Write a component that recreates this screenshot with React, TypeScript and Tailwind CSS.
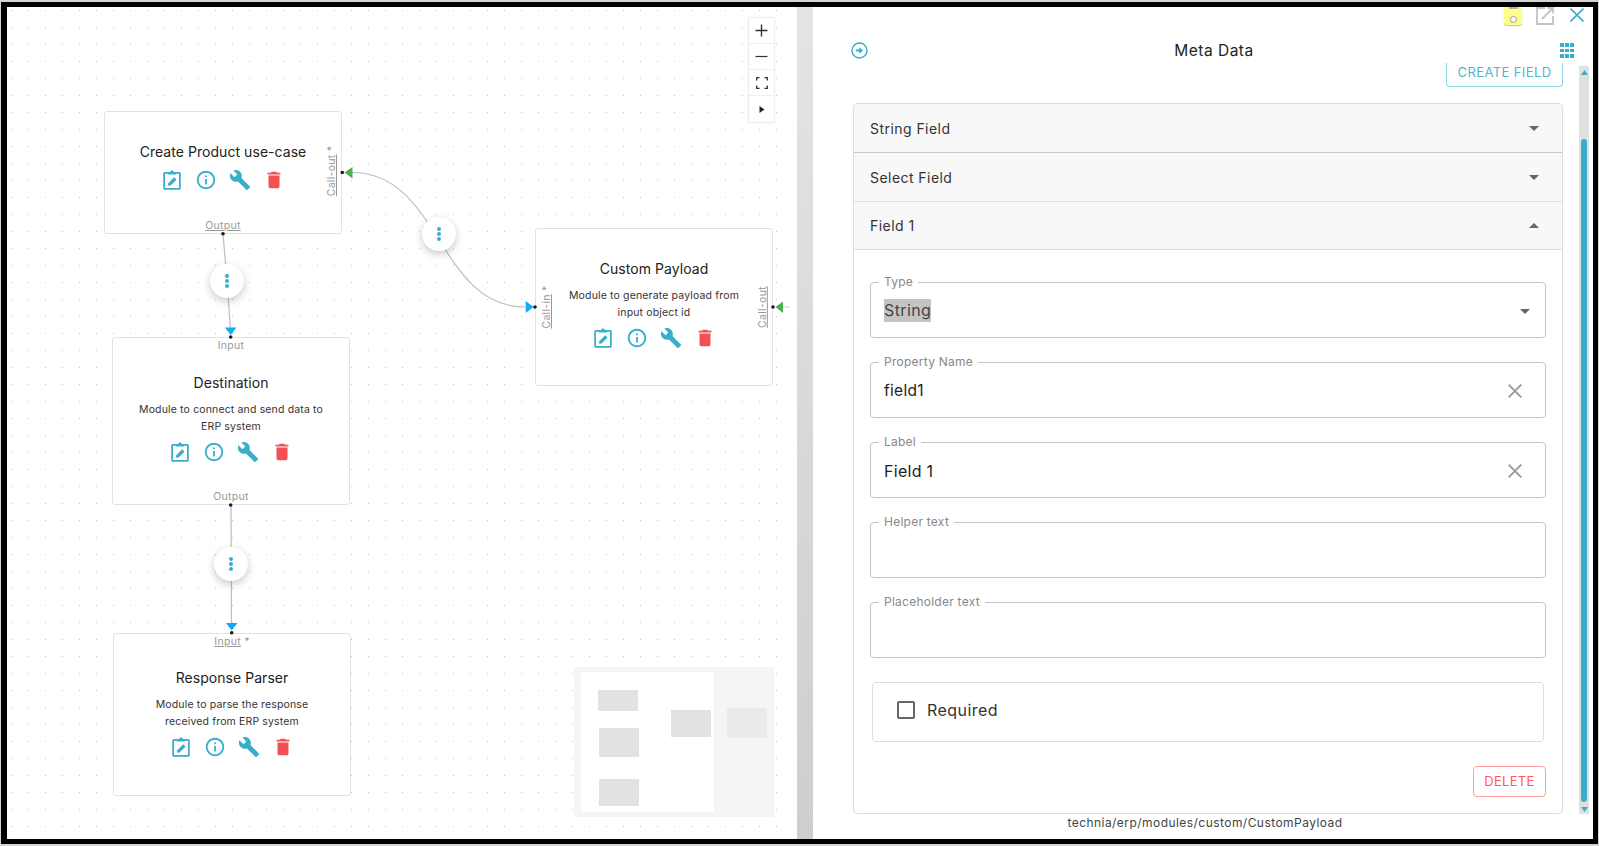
import { ReactNode } from "react";
import { MdBuild, MdDelete, MdInfoOutline } from "react-icons/md";

const TEAL = "#38afca";

function ClipboardEdit() {
  return (
    <svg width="22" height="22" viewBox="0 0 24 24" fill="none">
      <path d="M8 4.2 H4.2 Q3.4 4.2 3.4 5 V21 Q3.4 21.8 4.2 21.8 H19.8 Q20.6 21.8 20.6 21 V5 Q20.6 4.2 19.8 4.2 H16" stroke={TEAL} strokeWidth="1.9" />
      <path d="M7.6 6 V3.2 H10 L11 1.6 H13 L14 3.2 H16.4 V6 Z" fill={TEAL} />
      <path d="M7.6 18.4 L7.9 15.6 L14.4 9.1 L17 11.7 L10.4 18.1 Z" fill={TEAL} />
    </svg>
  );
}

function NodeIcons() {
  return (
    <div className="flex items-center gap-[12px]">
      <ClipboardEdit />
      <MdInfoOutline size={22} className="text-[#38afca]" />
      <MdBuild size={22} className="text-[#38afca]" />
      <MdDelete size={22} className="text-[#f05252]" />
    </div>
  );
}

function FlowNode({
  title,
  lines,
  className,
  children,
}: {
  title: string;
  lines?: string[];
  className: string;
  children?: ReactNode;
}) {
  return (
    <div
      className={`absolute flex w-[238px] flex-col items-center justify-center rounded-[3px] border border-[#e2e2e2] bg-white ${className}`}
    >
      <div className="text-[14px] leading-[20px] tracking-[0.05px] text-[#222]">{title}</div>
      {lines ? (
        <div className="mt-[8px] mb-[6px] text-center text-[10.5px] leading-[17px] tracking-[0.15px] text-[#333]">
          {lines.map((l) => (
            <div key={l}>{l}</div>
          ))}
        </div>
      ) : (
        <div className="h-[7px]" />
      )}
      <NodeIcons />
      {children}
    </div>
  );
}

function PortLabel({ text, star, className }: { text: string; star?: boolean; className: string }) {
  return (
    <div className={`absolute text-[10.5px] leading-[12px] tracking-[0.3px] whitespace-nowrap text-[#999] ${className}`}>
      <span className="underline underline-offset-1">{text}</span>
      {star && <span> *</span>}
    </div>
  );
}

function EdgeButton({ className }: { className: string }) {
  return (
    <div
      className={`absolute flex h-[34px] w-[34px] flex-col items-center justify-center gap-[1.5px] rounded-full bg-white shadow-[0_3px_8px_rgba(0,0,0,0.22)] ${className}`}
    >
      <span className="h-[3.5px] w-[3.5px] rounded-full bg-[#38afca]" />
      <span className="h-[3.5px] w-[3.5px] rounded-full bg-[#38afca]" />
      <span className="h-[3.5px] w-[3.5px] rounded-full bg-[#38afca]" />
    </div>
  );
}

function Edges() {
  return (
    <svg className="pointer-events-none absolute top-0 left-0 h-[832px] w-[790px] overflow-visible" viewBox="7 7 790 832">
      <g fill="none" stroke="#bdbdbd" strokeWidth="1.2">
        <path d="M223 234 L227 280 L230.5 330" />
        <path d="M231 505 L231.5 625" />
        <path d="M352 172.5 C440 172.5 438 307 525 307" />
      </g>
      <path d="M783 307 L790 307" stroke="#d8d8d8" strokeWidth="1.2" />
      <g fill="#4caf50">
        <path d="M344.5 172.5 L352.5 167 L352.5 178.5 Z" />
        <path d="M775.5 307 L783 301.5 L783 313 Z" />
      </g>
      <g fill="#12a9f5">
        <path d="M225 327.5 L236.5 327.5 L230.7 335 Z" />
        <path d="M226 623 L237.5 623 L231.7 630.5 Z" />
        <path d="M533.5 307 L525.7 301 L525.7 313 Z" />
      </g>
      <g fill="#1a1a2e">
        <circle cx="342.3" cy="172.5" r="1.8" />
        <circle cx="223" cy="233.7" r="1.8" />
        <circle cx="230.7" cy="337" r="1.8" />
        <circle cx="230.7" cy="505" r="1.8" />
        <circle cx="231.7" cy="632.8" r="1.8" />
        <circle cx="535" cy="307" r="1.8" />
        <circle cx="773" cy="307" r="1.8" />
      </g>
    </svg>
  );
}

function ZoomControls() {
  return (
    <div className="absolute top-[10px] left-[741px] flex w-[27px] flex-col border border-[#eeeeee] bg-white text-[#333] shadow-[0_0_2px_rgba(0,0,0,0.06)]">
      <div className="flex h-[26px] items-center justify-center border-b border-[#eeeeee]">
        <svg width="13" height="13" viewBox="0 0 13 13" stroke="#333" strokeWidth="1.4">
          <path d="M6.5 0.5 V12.5 M0.5 6.5 H12.5" />
        </svg>
      </div>
      <div className="flex h-[26px] items-center justify-center border-b border-[#eeeeee]">
        <svg width="13" height="13" viewBox="0 0 13 13" stroke="#333" strokeWidth="1.2">
          <path d="M0.5 6.5 H12.5" />
        </svg>
      </div>
      <div className="flex h-[26px] items-center justify-center border-b border-[#eeeeee]">
        <svg width="12" height="12" viewBox="0 0 12 12" fill="none" stroke="#333" strokeWidth="1.3">
          <path d="M0.7 3.5 V0.7 H3.5 M8.5 0.7 H11.3 V3.5 M11.3 8.5 V11.3 H8.5 M3.5 11.3 H0.7 V8.5" />
        </svg>
      </div>
      <div className="flex h-[26px] items-center justify-center">
        <svg width="6" height="7" viewBox="0 0 6 7" fill="#222">
          <path d="M0.5 0 L5.5 3.5 L0.5 7 Z" />
        </svg>
      </div>
    </div>
  );
}

function MiniMap() {
  return (
    <div className="absolute top-[660px] left-[567px] h-[150px] w-[200px] bg-[#f5f5f5]">
      <div className="absolute top-[5px] left-[7px] h-[140px] w-[133px] bg-white" />
      <div className="absolute top-[23px] left-[24px] h-[21px] w-[40px] bg-[#e2e2e2]" />
      <div className="absolute top-[61px] left-[25px] h-[29px] w-[40px] bg-[#e2e2e2]" />
      <div className="absolute top-[112px] left-[25px] h-[27px] w-[40px] bg-[#e2e2e2]" />
      <div className="absolute top-[43px] left-[97px] h-[27px] w-[40px] bg-[#e2e2e2]" />
      <div className="absolute top-[41px] left-[153px] h-[30px] w-[40px] bg-[#eaeaea]" />
    </div>
  );
}

function Canvas() {
  return (
    <div className="h-full w-[790px] shrink-0 bg-white">
      <div className="relative h-[822px] w-[773px] bg-[radial-gradient(circle,#c4c4c4_0.8px,transparent_1px)] bg-[size:17px_17px] bg-[position:-4px_-5px]">
        <FlowNode title="Create Product use-case" className="top-[104px] left-[97px] h-[123px] pb-[12px]">
          <PortLabel text="Call-out" star className="top-[59px] left-[227px] -translate-x-1/2 -translate-y-1/2 -rotate-90" />
          <PortLabel text="Output" className="bottom-[1px] left-1/2 -translate-x-1/2" />
        </FlowNode>
        <FlowNode
          title="Destination"
          lines={["Module to connect and send data to", "ERP system"]}
          className="top-[330px] left-[105px] h-[168px] pb-[6px]"
        >
          <div className="absolute top-[2px] left-1/2 -translate-x-1/2 text-[10.5px] leading-[12px] tracking-[0.3px] text-[#999]">Input</div>
          <div className="absolute bottom-[1px] left-1/2 -translate-x-1/2 text-[10.5px] leading-[12px] tracking-[0.3px] text-[#999]">Output</div>
        </FlowNode>
        <FlowNode
          title="Response Parser"
          lines={["Module to parse the response", "received from ERP system"]}
          className="top-[626px] left-[106px] h-[163px] pb-[3px]"
        >
          <PortLabel text="Input" star className="top-[2px] left-1/2 -translate-x-1/2" />
        </FlowNode>
        <FlowNode
          title="Custom Payload"
          lines={["Module to generate payload from", "input object id"]}
          className="top-[221px] left-[528px] h-[158px] pb-[6px]"
        >
          <PortLabel text="Call-in" star className="top-1/2 left-[11px] -translate-x-1/2 -translate-y-1/2 -rotate-90" />
          <PortLabel text="Call-out" className="top-1/2 right-[9px] translate-x-1/2 -translate-y-1/2 -rotate-90" />
        </FlowNode>
        <Edges />
        <EdgeButton className="top-[257px] left-[203px]" />
        <EdgeButton className="top-[210px] left-[415px]" />
        <EdgeButton className="top-[540px] left-[207px]" />
        <ZoomControls />
        <MiniMap />
      </div>
    </div>
  );
}

function Caret({ up }: { up?: boolean }) {
  return (
    <svg width="10" height="5" viewBox="0 0 10 5" fill="#666">
      <path d={up ? "M0 5 L5 0 L10 5 Z" : "M0 0 L10 0 L5 5 Z"} />
    </svg>
  );
}

function AccordionRow({ label, up, className }: { label: string; up?: boolean; className: string }) {
  return (
    <div className={`flex items-center justify-between bg-[#f8f8f8] pr-[23px] pl-[16px] text-[14px] tracking-[0.45px] text-[#333] ${className}`}>
      <span>{label}</span>
      <Caret up={up} />
    </div>
  );
}

function ClearIcon() {
  return (
    <svg width="14" height="14" viewBox="0 0 14 14" stroke="#999" strokeWidth="1.8">
      <path d="M0.7 0.7 L13.3 13.3 M13.3 0.7 L0.7 13.3" />
    </svg>
  );
}

function Field({ label, children }: { label: string; children?: ReactNode }) {
  return (
    <div className="relative flex h-[56px] items-center justify-between rounded-[4px] border border-[#c4c4c4] pt-[2px] pr-[23px] pl-[13px]">
      <span className="absolute top-[-8px] left-[8px] bg-white px-[5px] text-[12px] leading-[13px] tracking-[0.25px] text-[#888]">{label}</span>
      {children}
    </div>
  );
}

function MetaPanel() {
  return (
    <div className="flex h-full min-w-0 flex-1 flex-col bg-white">
      <div className="flex h-[20px] items-start justify-end gap-[14px] pr-[9px]">
        <div className="flex h-[18px] w-[18px] flex-col items-center justify-between rounded-b-[3px] bg-[#ffff8a] pb-[2px] shadow-[0_1px_1px_rgba(0,0,0,0.25)]">
          <span className="h-[2px] w-[9px] bg-[#b0b0b0]" />
          <span className="h-[7px] w-[7px] rounded-full border-[1.5px] border-[#999] bg-white" />
        </div>
        <svg className="mr-[2px]" width="18" height="18" viewBox="0 0 18 18" fill="none" stroke="#c4c4c4" strokeWidth="1.8">
          <path d="M9 1 H1 V17 H17 V9 M6 12 L17 1 M11.5 1 H17 V6.5" />
        </svg>
        <svg className="mt-[1px]" width="14" height="14" viewBox="0 0 14 14" stroke="#38afca" strokeWidth="1.6">
          <path d="M0.5 0.5 L13.5 13.5 M13.5 0.5 L0.5 13.5" />
        </svg>
      </div>
      <div className="flex h-[39px] items-center justify-between pt-[8px] pr-[19px] pl-[38px]">
        <svg width="17" height="17" viewBox="0 0 17 17">
          <circle cx="8.5" cy="8.5" r="7.5" fill="none" stroke="#38afca" strokeWidth="1.4" />
          <path d="M4.8 7.6 H8.2 V5.2 L12 8.5 L8.2 11.8 V9.4 H4.8 Z" fill="#38afca" />
        </svg>
        <span className="text-[15.5px] tracking-[0.5px] text-[#222]">Meta Data</span>
        <div className="grid grid-cols-3 gap-[1.5px]">
          {Array.from({ length: 9 }).map((_, i) => (
            <span key={i} className="h-[3.7px] w-[3.7px] bg-[#38afca]" />
          ))}
        </div>
      </div>

      <div className="flex h-[748px] gap-[16px] pl-[40px]">
        <div className="w-[710px] shrink-0">
          {/* button is scrolled half out of view, so only its lower part shows */}
          <div className="-mt-[3px] flex justify-end">
            <button className="h-[24px] w-[117px] rounded-b-[4px] border-x border-b border-[#8fd5e5] pb-[6px] text-[13px] leading-[16px] tracking-[0.4px] text-[#4fb6d0]">
              CREATE FIELD
            </button>
          </div>
          <div className="mt-[16px] overflow-hidden rounded-[4px] border border-[#dddddd]">
            <AccordionRow label="String Field" className="h-[49px] border-b border-[#c8c8c8]" />
            <AccordionRow label="Select Field" className="h-[49px] border-b border-[#dddddd]" />
            <AccordionRow label="Field 1" up className="h-[48px] border-b border-[#dddddd]" />
            <div className="flex flex-col gap-[24px] px-[16px] pt-[32px] pb-[16px]">
              <Field label="Type">
                <span className="mb-[2px] bg-[#c4c4c4] text-[16px] leading-[23px] tracking-[0.4px] text-[#444]">String</span>
                <span className="-mr-[8px]">
                  <Caret />
                </span>
              </Field>
              <Field label="Property Name">
                <span className="text-[15.5px] tracking-[0.3px] text-[#222]">field1</span>
                <ClearIcon />
              </Field>
              <Field label="Label">
                <span className="mb-[1px] text-[16px] tracking-[0.3px] text-[#222]">Field 1</span>
                <ClearIcon />
              </Field>
              <Field label="Helper text" />
              <Field label="Placeholder text" />
              <div className="ml-[2px] flex h-[60px] w-[672px] items-center gap-[12px] rounded-[4px] border border-[#dddddd] pb-[4px] pl-[24px]">
                <span className="h-[18px] w-[18px] rounded-[2px] border-2 border-[#666]" />
                <span className="mb-[1px] text-[16px] tracking-[0.45px] text-[#333]">Required</span>
              </div>
              <div className="flex justify-end">
                <button className="h-[31px] w-[73px] rounded-[4px] border border-[#ff9e9e] text-[13px] tracking-[0.3px] text-[#ff5a5a]">
                  DELETE
                </button>
              </div>
            </div>
          </div>
        </div>
        <div className="flex h-full w-[10px] shrink-0 flex-col items-center bg-[#e0e0e0] pt-[4px]">
          <svg width="7" height="5" viewBox="0 0 7 5" fill="#38afca">
            <path d="M0 5 L3.5 0 L7 5 Z" />
          </svg>
          <div className="mt-[64px] h-[663px] w-[6px] rounded-full bg-[#38afca]" />
          <svg className="mt-[5px]" width="7" height="5" viewBox="0 0 7 5" fill="#38afca">
            <path d="M0 0 L7 0 L3.5 5 Z" />
          </svg>
        </div>
      </div>

      <div className="pl-[4px] text-center text-[12px] leading-[18px] tracking-[0.45px] text-[#444]">technia/erp/modules/custom/CustomPayload</div>
    </div>
  );
}

export default function App() {
  return (
    <div className="h-[846px] w-[1599px] overflow-hidden bg-[#d4d4d4] px-[1px] py-[2px] font-['Inter',sans-serif]">
      <div className="flex h-[842px] border-t-[5px] border-r-[5px] border-b-[5px] border-l-[6px] border-black bg-white">
        <Canvas />
        <div className="h-full w-[16px] shrink-0 bg-gradient-to-b from-[#e4e4e4] to-[#cecece]" />
        <MetaPanel />
      </div>
    </div>
  );
}
